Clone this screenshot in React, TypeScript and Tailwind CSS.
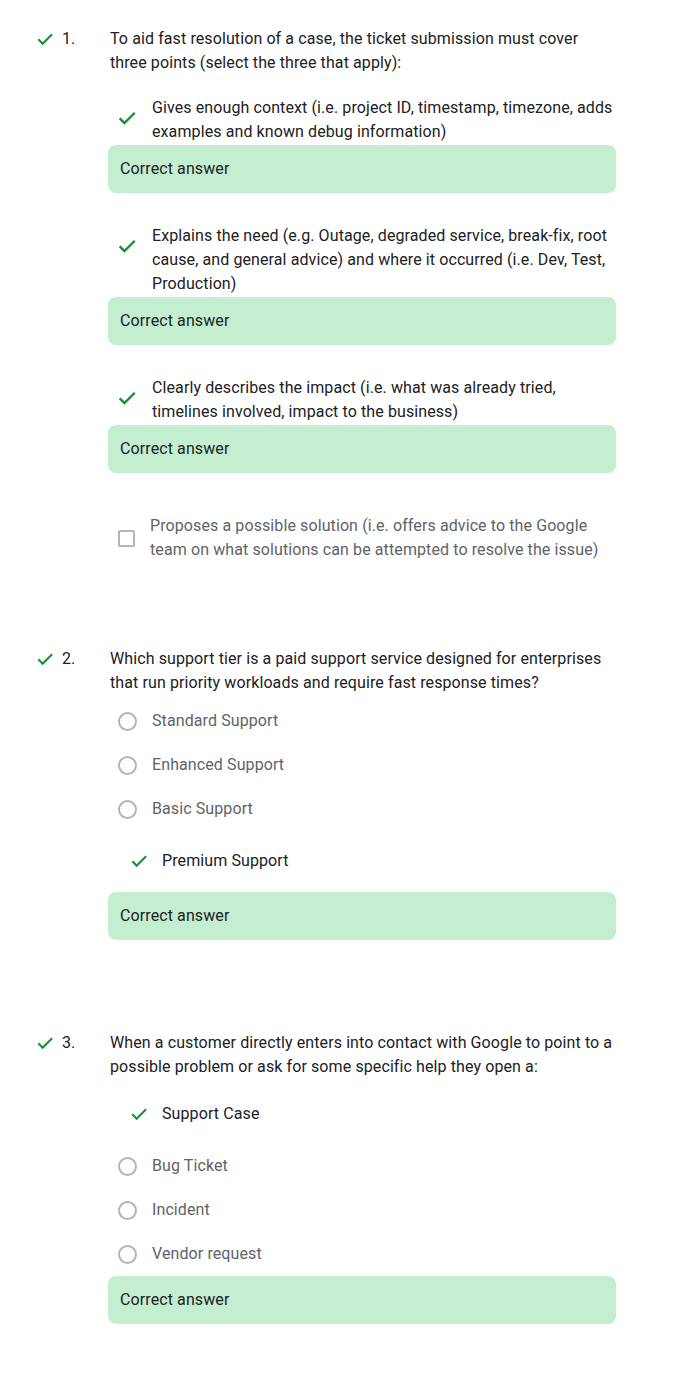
import React from 'react';

const font = { fontFamily: 'Roboto, "Noto Sans", sans-serif' };

function CheckIcon({ className = '' }: { className?: string }) {
  return (
    <svg viewBox="0 0 24 24" className={className} fill="none">
      <path d="M4 12.4l5.2 5.2L20.5 6.3" stroke="#1e8e3e" strokeWidth="2.6" />
    </svg>
  );
}

function QuestionHeader({ num, text, className = '' }: { num: string; text: string; className?: string }) {
  return (
    <div className={`flex text-[16px] leading-6 tracking-[0.1px] text-[#202124] ${className}`}>
      <div className="flex w-[110px] items-start pl-[35px]">
        <CheckIcon className="mt-[2px] h-[20px] w-[20px]" />
        <span className="ml-[7px]">{num}</span>
      </div>
      <div className="w-[506px]">{text}</div>
    </div>
  );
}

function CorrectBox({ className = '' }: { className?: string }) {
  return (
    <div className={`flex h-12 w-[508px] items-center rounded-lg bg-[#c4eed0] pl-3 text-[16px] tracking-[0.1px] text-[#202124] ${className}`}>
      Correct answer
    </div>
  );
}

function CheckedMulti({ text, className = '' }: { text: string; className?: string }) {
  return (
    <div className={`flex items-start ${className}`}>
      <CheckIcon className="ml-[8px] mt-[11px] h-[22px] w-[22px]" />
      <div className="ml-[14px] w-[462px] text-[16px] leading-6 tracking-[0.1px] text-[#202124]">{text}</div>
    </div>
  );
}

function Radio({ text, className = '' }: { text: string; className?: string }) {
  return (
    <div className={`flex h-[44px] items-center ${className}`}>
      <div className="ml-[10px] h-[19px] w-[19px] rounded-full border-2 border-[#b4b4b4]" />
      <span className="ml-[15px] text-[16px] tracking-[0.1px] text-[#5f6368]">{text}</span>
    </div>
  );
}

function CheckedSingle({ text, className = '' }: { text: string; className?: string }) {
  return (
    <div className={`flex h-[44px] items-center ${className}`}>
      <CheckIcon className="ml-[21px] h-[20px] w-[20px]" />
      <span className="ml-[13px] text-[16px] tracking-[0.1px] text-[#202124]">{text}</span>
    </div>
  );
}

export default function App() {
  return (
    <div className="min-h-screen bg-white pb-[52px]" style={font}>
      <QuestionHeader
        className="pt-[27px]"
        num="1."
        text="To aid fast resolution of a case, the ticket submission must cover three points (select the three that apply):"
      />
      <div className="ml-[108px]">
        <CheckedMulti
          className="mt-[21px]"
          text="Gives enough context (i.e. project ID, timestamp, timezone, adds examples and known debug information)"
        />
        <CorrectBox className="mt-px" />
        <CheckedMulti
          className="mt-[31px]"
          text="Explains the need (e.g. Outage, degraded service, break-fix, root cause, and general advice) and where it occurred (i.e. Dev, Test, Production)"
        />
        <CorrectBox className="mt-px" />
        <CheckedMulti
          className="mt-[31px]"
          text="Clearly describes the impact (i.e. what was already tried, timelines involved, impact to the business)"
        />
        <CorrectBox className="mt-px" />
        <div className="mt-[41px] flex items-center">
          <div className="ml-[10px] h-[17px] w-[17px] rounded-[2px] border-2 border-[#b4b4b4]" />
          <div className="ml-[15px] w-[462px] text-[16px] leading-6 tracking-[0.1px] text-[#5f6368]">
            Proposes a possible solution (i.e. offers advice to the Google team on what solutions can be attempted to resolve the issue)
          </div>
        </div>
      </div>

      <QuestionHeader
        className="mt-[85px]"
        num="2."
        text="Which support tier is a paid support service designed for enterprises that run priority workloads and require fast response times?"
      />
      <div className="ml-[108px]">
        <Radio className="mt-[4px]" text="Standard Support" />
        <Radio text="Enhanced Support" />
        <Radio text="Basic Support" />
        <CheckedSingle className="mt-[8px]" text="Premium Support" />
        <CorrectBox className="mt-[9px]" />
      </div>

      <QuestionHeader
        className="mt-[91px]"
        num="3."
        text="When a customer directly enters into contact with Google to point to a possible problem or ask for some specific help they open a:"
      />
      <div className="ml-[108px]">
        <CheckedSingle className="mt-[13px]" text="Support Case" />
        <Radio className="mt-[8px]" text="Bug Ticket" />
        <Radio text="Incident" />
        <Radio text="Vendor request" />
        <CorrectBox />
      </div>
    </div>
  );
}
